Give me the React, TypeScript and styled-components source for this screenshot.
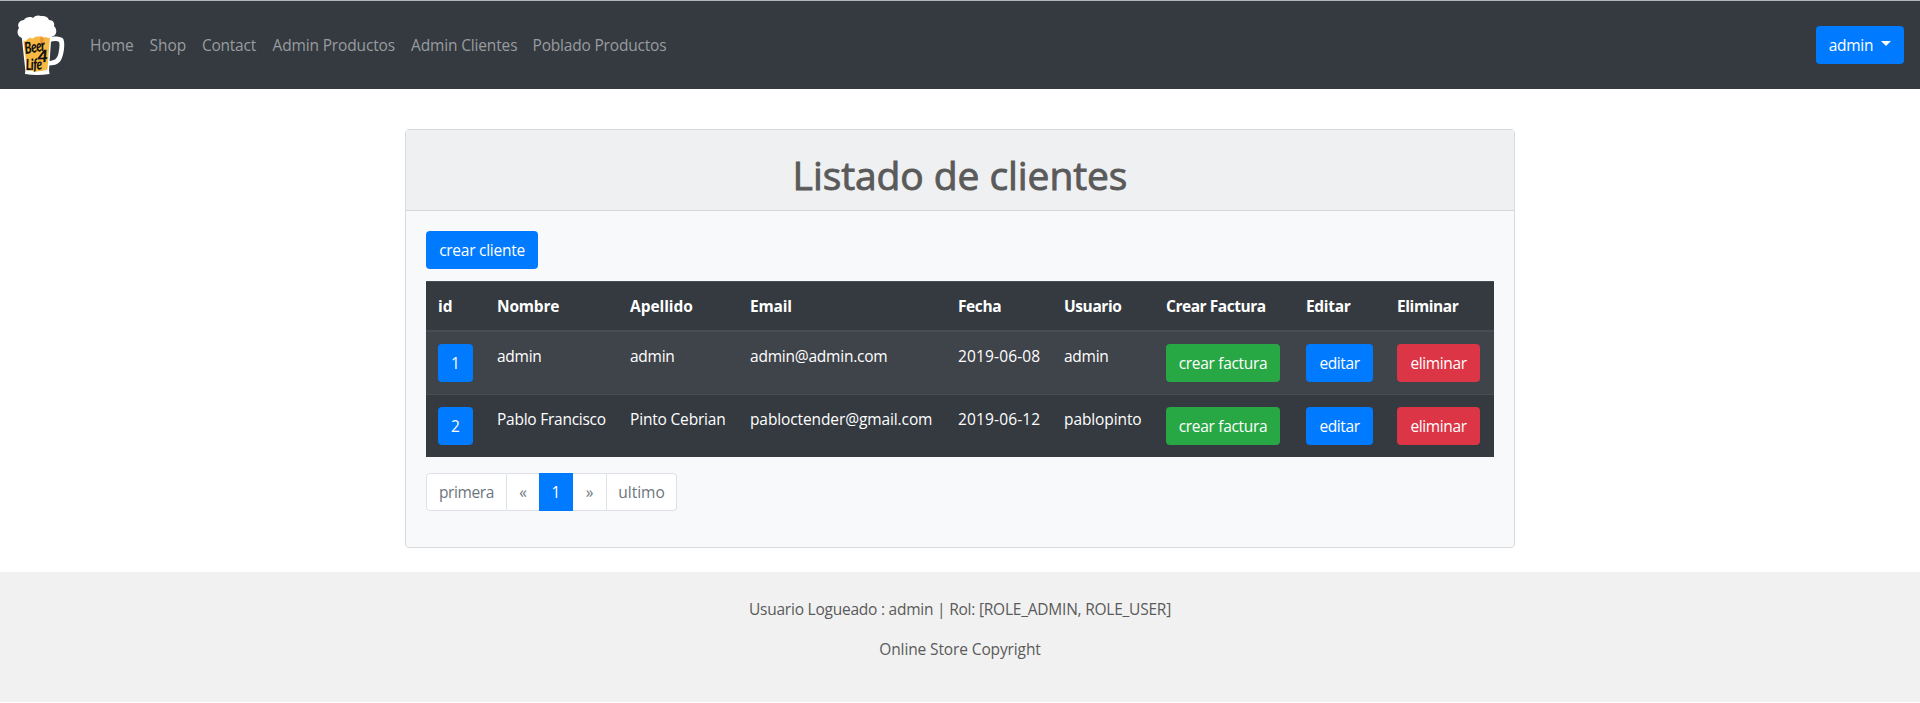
import React from 'react';
import styled, { createGlobalStyle } from 'styled-components';

const GlobalStyle = createGlobalStyle`
  *, *::before, *::after { box-sizing: border-box; }
  body {
    margin: 0;
    background: #fff;
    color: #5a5a5a;
    font-family: "Open Sans", "Noto Sans", sans-serif;
    font-size: 15.5px;
    line-height: 24px;
  }
`;

const Page = styled.div`
  display: flex;
  flex-direction: column;
`;

const Navbar = styled.nav`
  display: flex;
  align-items: center;
  height: 89px;
  padding: 0 16px;
  border-top: 1px solid #b3b6b9;
  background: #343a40;
`;

const Brand = styled.a`
  display: flex;
  margin-right: 16px;
`;

const NavLinks = styled.div`
  display: flex;
  flex: 1;
`;

const NavLink = styled.a<{ $width: number; $track: number }>`
  width: ${(p) => p.$width}px;
  padding: 8px;
  color: #999c9f;
  letter-spacing: ${(p) => p.$track}px;
  white-space: nowrap;
`;

const tones = { primary: '#007bff', success: '#28a745', danger: '#dc3545' };

const Button = styled.button<{ $tone?: keyof typeof tones; $width: number; $track?: number }>`
  display: flex;
  align-items: center;
  justify-content: center;
  width: ${(p) => p.$width}px;
  height: 38px;
  padding: 0;
  border: 0;
  border-radius: 4px;
  background: ${(p) => tones[p.$tone ?? 'primary']};
  color: #fff;
  font: inherit;
  letter-spacing: ${(p) => p.$track ?? 0}px;
  white-space: nowrap;
`;

const Caret = styled.span`
  margin: 0 0 3px 8px;
  border-top: 5px solid #fff;
  border-left: 5px solid transparent;
  border-right: 5px solid transparent;
`;

const Card = styled.main`
  width: 1110px;
  height: 419px;
  margin: 40px auto 24px;
  border: 1px solid #d8dadd;
  border-radius: 4px;
  background: #f8f9fb;
`;

const CardHeader = styled.header`
  height: 81px;
  padding: 21px 20px 0;
  border-bottom: 1px solid #d4d6d8;
  background: #eff0f2;
  text-align: center;
`;

const Title = styled.h1`
  margin: 0;
  font-size: 39px;
  font-weight: 500;
  line-height: 48px;
  letter-spacing: -0.08px;
  -webkit-text-stroke: 0.9px currentColor;
`;

const CardBody = styled.div`
  display: flex;
  flex-direction: column;
  align-items: flex-start;
  padding: 20px;
`;

const Table = styled.table`
  width: 1068px;
  margin: 12px 0 16px;
  border-spacing: 0;
  table-layout: fixed;
  background: #343a40;
  color: #fff;
`;

const HeadCell = styled.th<{ $width: number; $track: number }>`
  width: ${(p) => p.$width}px;
  height: 51px;
  padding: 12px 0 12px 12px;
  border-top: 1px solid #454d55;
  border-bottom: 2px solid #454d55;
  text-align: left;
  white-space: nowrap;
  letter-spacing: ${(p) => p.$track}px;
`;

const Row = styled.tr`
  &:nth-child(odd) { background: #3f444b; }
  &:not(:first-child) > td { border-top: 1px solid #454d55; }
`;

const Cell = styled.td<{ $track?: number }>`
  padding: 12px 0 12px 12px;
  vertical-align: top;
  white-space: nowrap;
  letter-spacing: ${(p) => p.$track ?? 0}px;
`;

const Pagination = styled.div`
  display: flex;
  height: 38px;
`;

const PageItem = styled.a<{ $width: number; $track?: number; $active?: boolean }>`
  display: flex;
  justify-content: center;
  width: ${(p) => p.$width}px;
  padding-top: 6px;
  border: 1px solid ${(p) => (p.$active ? '#007bff' : '#dee2e6')};
  border-left-width: ${(p) => (p.$active ? 1 : 0)}px;
  background: ${(p) => (p.$active ? '#007bff' : '#fff')};
  color: ${(p) => (p.$active ? '#fff' : '#6c757d')};
  letter-spacing: ${(p) => p.$track ?? 0}px;
  &:first-child {
    border-left-width: 1px;
    border-radius: 4px 0 0 4px;
  }
  &:last-child { border-radius: 0 4px 4px 0; }
  &:nth-child(2) { border-right: 0; }
`;

const Footer = styled.footer`
  display: flex;
  flex-direction: column;
  align-items: center;
  gap: 16px;
  height: 130px;
  padding-top: 25px;
  background: #f1f1f1;
`;

const FooterText = styled.p<{ $track: number }>`
  margin: 0;
  letter-spacing: ${(p) => p.$track}px;
`;

const LogoText = styled.text`
  font-family: "Lato", sans-serif;
  font-weight: 900;
  font-style: italic;
  letter-spacing: -0.5px;
  fill: #111;
`;

function BeerLogo() {
  return (
    <svg width="50" height="64" viewBox="16 13 50 64" aria-label="Beer 4 Life">
      <path d="M49 37.5C53 36 60 36.4 63 38.5C65.5 42 64 55 61 60C58 65 53 65.5 48 65.5V61C54 61 57 59 58.3 54C59.4 49 60 44 59 42C57 40.6 53 41 50 42Z" fill="#fff" />
      <path d="M21.5 35L51.5 34L49 70L49.5 74Q37 76 25 74L25.3 70Z" fill="#fff" />
      <path d="M23 37L50 36L47.5 69.5Q37 73 27 70Z" fill="#f6b944" />
      <path d="M40 37L44 38L43 45L40 42Z" fill="#ef9638" />
      <path d="M20 37C17.5 35 16.5 31 19 28C16.5 24 20 20 24 20C26 16.5 31 16.5 33 18C35 15 39 15 41 16C45 15.5 48 17 49 20C53 20 55 23 54 26C58 30 56.5 36 52 36.5Q49 39 46 37Q43 38.5 41 35Q38 37 36 36Q33 40 30 37.5Q27 39 25.5 41Q22.5 41 22 38Z" fill="#fff" />
      <LogoText transform="translate(25.6 54) rotate(-10) scale(.86 1.25)" fontSize="13">Beer</LogoText>
      <LogoText transform="translate(37.5 62.5) rotate(-3) scale(1.1 1)" fontSize="17">4</LogoText>
      <LogoText transform="translate(26 70.3) rotate(-3) scale(.88 1.2)" fontSize="13">Life</LogoText>
    </svg>
  );
}

const links = [
  { label: 'Home', width: 59.5, track: 0 },
  { label: 'Shop', width: 52.5, track: 0 },
  { label: 'Contact', width: 70.5, track: -0.25 },
  { label: 'Admin Productos', width: 138.5, track: -0.15 },
  { label: 'Admin Clientes', width: 121.5, track: -0.15 },
  { label: 'Poblado Productos', width: 150, track: -0.19 },
];

const columns = [
  { label: 'id', width: 59, track: 0 },
  { label: 'Nombre', width: 133, track: -0.2 },
  { label: 'Apellido', width: 120, track: -0.05 },
  { label: 'Email', width: 208, track: -0.2 },
  { label: 'Fecha', width: 106, track: -0.4 },
  { label: 'Usuario', width: 102, track: -0.4 },
  { label: 'Crear Factura', width: 140, track: -0.46 },
  { label: 'Editar', width: 91, track: -0.33 },
  { label: 'Eliminar', width: 109, track: -0.42 },
];

const clients: { id: number; fields: [string, number][] }[] = [
  {
    id: 1,
    fields: [['admin', -0.26], ['admin', -0.26], ['admin@admin.com', -0.22], ['2019-06-08', 0.14], ['admin', -0.26]],
  },
  {
    id: 2,
    fields: [['Pablo Francisco', -0.25], ['Pinto Cebrian', -0.18], ['pabloctender@gmail.com', -0.11], ['2019-06-12', 0.14], ['pablopinto', -0.1]],
  },
];

export default function App() {
  return (
    <Page>
      <GlobalStyle />
      <Navbar>
        <Brand><BeerLogo /></Brand>
        <NavLinks>
          {links.map((l) => (
            <NavLink key={l.label} $width={l.width} $track={l.track}>{l.label}</NavLink>
          ))}
        </NavLinks>
        <Button $width={88} $track={-0.26}>admin<Caret /></Button>
      </Navbar>
      <Card>
        <CardHeader><Title>Listado de clientes</Title></CardHeader>
        <CardBody>
          <Button $width={112} $track={-0.26}>crear cliente</Button>
          <Table>
            <thead>
              <tr>
                {columns.map((c) => (
                  <HeadCell key={c.label} $width={c.width} $track={c.track}>{c.label}</HeadCell>
                ))}
              </tr>
            </thead>
            <tbody>
              {clients.map((c) => (
                <Row key={c.id}>
                  <Cell><Button $width={35}>{c.id}</Button></Cell>
                  {c.fields.map(([text, track], i) => (
                    <Cell key={i} $track={track}>{text}</Cell>
                  ))}
                  <Cell><Button $tone="success" $width={114} $track={-0.32}>crear factura</Button></Cell>
                  <Cell><Button $width={67} $track={-0.4}>editar</Button></Cell>
                  <Cell><Button $tone="danger" $width={83} $track={-0.38}>eliminar</Button></Cell>
                </Row>
              ))}
            </tbody>
          </Table>
          <Pagination>
            <PageItem $width={81} $track={-0.4}>primera</PageItem>
            <PageItem $width={32}>«</PageItem>
            <PageItem $width={34} $active>1</PageItem>
            <PageItem $width={34}>»</PageItem>
            <PageItem $width={70}>ultimo</PageItem>
          </Pagination>
        </CardBody>
      </Card>
      <Footer>
        <FooterText $track={-0.23}>Usuario Logueado : admin | Rol: [ROLE_ADMIN, ROLE_USER]</FooterText>
        <FooterText $track={-0.12}>Online Store Copyright</FooterText>
      </Footer>
    </Page>
  );
}
